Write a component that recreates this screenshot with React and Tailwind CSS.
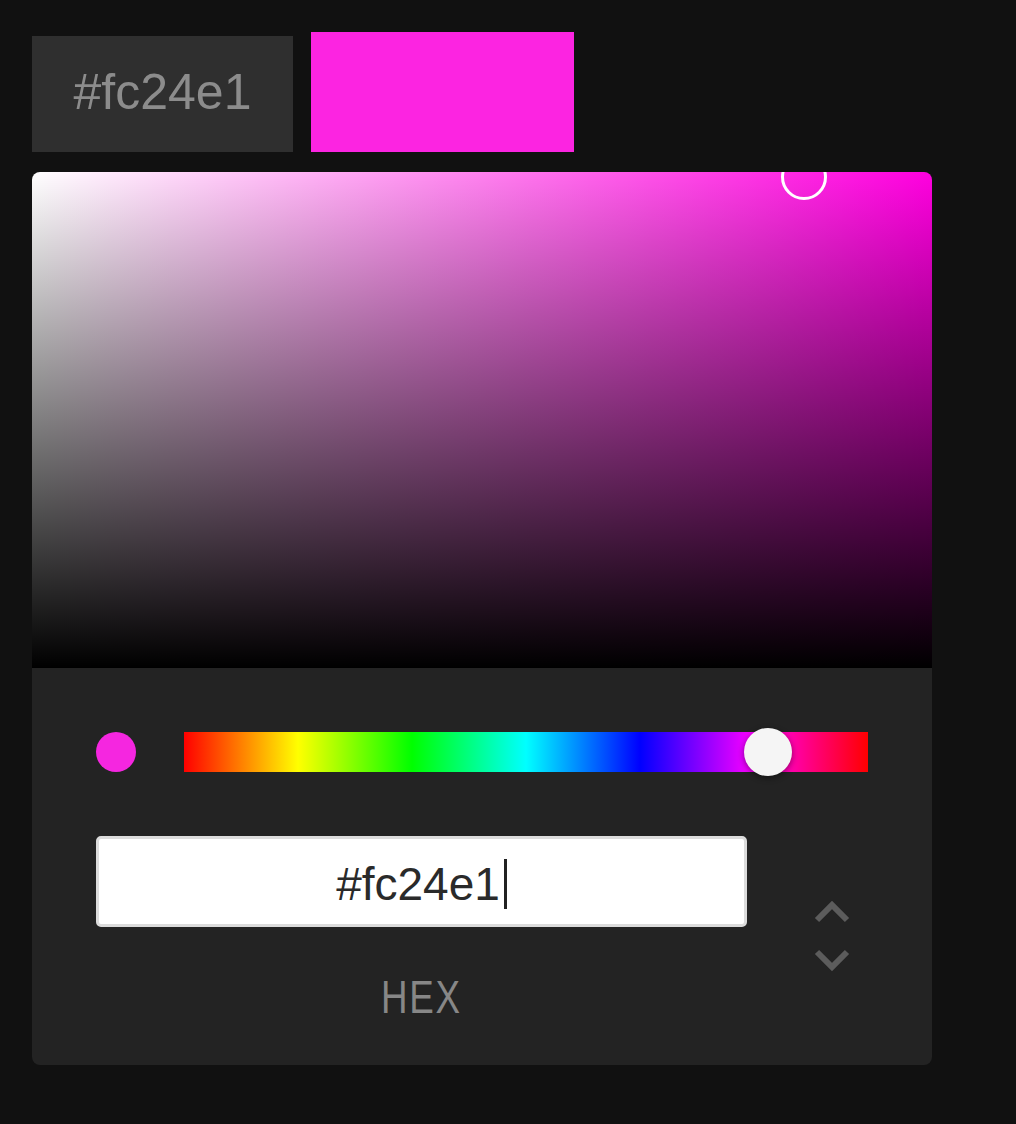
export default function App() {
  return (
    <div className="w-full h-[1124px] bg-[#111111] pt-[32px] pl-[32px] font-['Liberation_Sans',Arial,sans-serif]">
      <div className="flex items-start gap-[18px]">
        <div className="mt-[4px] w-[261px] h-[116px] bg-[#2f2f2f] flex items-center justify-center">
          <span className="text-[50px] leading-none text-[#8c8c8c] pb-[4px]">#fc24e1</span>
        </div>
        <div className="w-[263px] h-[120px] bg-[#fc24e1]" />
      </div>

      <div className="mt-[20px] w-[900px] h-[893px] rounded-[8px] overflow-hidden bg-[#232323]">
        <div className="relative h-[496px] bg-[linear-gradient(to_top,#000,transparent),linear-gradient(to_right,#fff,#ff00df)]">
          <div className="absolute left-[749px] top-[-18px] w-[46px] h-[46px] rounded-full border-[3px] border-white" />
        </div>

        <div className="px-[64px] pt-[60px]">
          <div className="flex items-center h-[48px] gap-[48px]">
            <div className="w-[40px] h-[40px] rounded-full bg-[#f526e0]" />
            <div className="relative w-[684px] h-[40px] bg-[linear-gradient(to_right,#f00,#ff0,#0f0,#0ff,#00f,#f0f,#f00)]">
              <div className="absolute left-[560px] top-[-4px] w-[48px] h-[48px] rounded-full bg-[#f5f5f5] shadow-[0_2px_6px_rgba(0,0,0,0.45)]" />
            </div>
          </div>

          <div className="mt-[60px] flex items-start">
            <div className="flex flex-col items-center w-[651px]">
              <div className="w-[651px] h-[91px] bg-white border-[3px] border-[#dcdcdc] rounded-[5px] flex items-center justify-center pt-[4px]">
                <span className="text-[46px] leading-none text-[#2a2a2a]">#fc24e1</span>
                <span className="ml-[4px] w-[3px] h-[50px] bg-[#222]" />
              </div>
              <div className="mt-[47px] h-[46px] flex justify-center">
                <span className="inline-block text-[46px] leading-none text-[#878787] tracking-[2px] scale-x-[0.8]">HEX</span>
              </div>
            </div>
            <div className="ml-[67px] mt-[64px]">
              <svg width="36" height="72" viewBox="0 0 36 72" fill="none" stroke="#5c5c5c" strokeWidth="6" strokeLinecap="butt" strokeLinejoin="miter">
                <polyline points="3,20 18,5 33,20" />
                <polyline points="3,52 18,67 33,52" />
              </svg>
            </div>
          </div>
        </div>
      </div>
    </div>
  );
}
